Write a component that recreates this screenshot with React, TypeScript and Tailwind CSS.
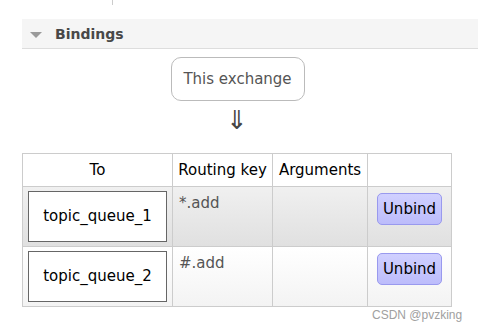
import React from 'react';

const bindings = [
  { queue: 'topic_queue_1', key: '*.add', odd: true },
  { queue: 'topic_queue_2', key: '#.add', odd: false },
];

export default function App() {
  return (
    <div className="relative w-[478px] h-[330px] bg-white font-['DejaVu_Sans',sans-serif] text-[#484848]">
      {/* bit of the section above */}
      <div className="ml-[112px] w-px h-[5px] bg-[#cccccc]" />

      {/* section header */}
      <div className="mt-[14px] ml-[22px] h-[30px] flex items-center bg-[#f5f5f5] border-b border-[#dddddd]">
        <svg width="12" height="6" viewBox="0 0 12 6" className="ml-[8px] mt-[2px]">
          <polygon points="0,0 12,0 6,6" fill="#9a9a9a" />
        </svg>
        <span className="ml-[13px] mt-[2px] text-[14px] font-bold text-[#484848]">Bindings</span>
      </div>

      <div className="ml-[22px] w-[430px] flex flex-col items-center">
        <div className="mt-[8px] ml-[1px] w-[134px] h-[44px] flex items-center justify-center rounded-[10px] border border-[#bbbbbb] text-[15px] text-[#555555]">
          This exchange
        </div>
        <div className="mt-[4px] h-[30px] text-[26px] leading-[31px] text-[#444444]">⇓</div>

        <table className="mt-[18px] w-[430px] border-collapse text-[15px]">
          <thead>
            <tr className="h-[33px]">
              <th className="w-[150px] border border-[#cccccc] font-normal text-black">To</th>
              <th className="w-[100px] border border-[#cccccc] font-normal text-black">Routing key</th>
              <th className="w-[95px] border border-[#cccccc] font-normal text-black">Arguments</th>
              <th className="border border-[#cccccc]"></th>
            </tr>
          </thead>
          <tbody>
            {bindings.map((b) => (
              <tr
                key={b.queue}
                className={
                  b.odd
                    ? 'h-[60px] bg-gradient-to-b from-[#f0f0f0] to-[#e0e0e0]'
                    : 'h-[60px] bg-gradient-to-b from-[#ffffff] to-[#f3f3f3]'
                }
              >
                <td className="border border-[#cccccc] px-[5px]">
                  <div className="w-[139px] h-[51px] flex items-center justify-center bg-white border-[1.5px] border-[#666666] text-black">
                    {b.queue}
                  </div>
                </td>
                <td className="border border-[#cccccc] align-top px-[6px] pt-[5px] text-[#555555]">{b.key}</td>
                <td className="border border-[#cccccc]"></td>
                <td className="border border-[#cccccc] align-top pt-[6px] pl-[9px]">
                  <button className="w-[65px] h-[32px] rounded-[5px] border border-[#9999ee] bg-gradient-to-b from-[#d0d0ff] to-[#bcbcfb] text-[15px] text-black">
                    Unbind
                  </button>
                </td>
              </tr>
            ))}
          </tbody>
        </table>
      </div>

      <div className="absolute left-[372px] top-[306px] text-[12px] text-[#a0a0a0] font-['Liberation_Sans',sans-serif]">
        CSDN @pvzking
      </div>
    </div>
  );
}
